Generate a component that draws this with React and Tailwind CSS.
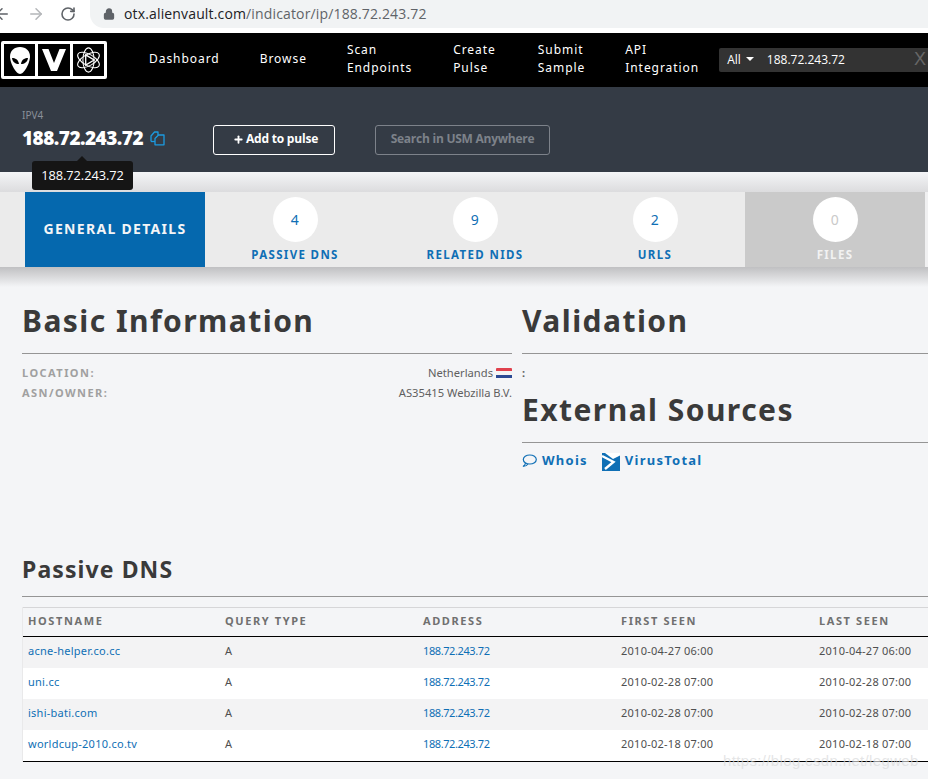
import React from "react";
import { ArrowLeft, ArrowRight, RotateCw, Lock, Plus } from "lucide-react";

const font = "font-['Noto_Sans',sans-serif]";

function Logo() {
  return (
    <div className="ml-[1px] flex h-[38px] w-[106px] gap-[3px] rounded-[2px] bg-white p-[3px]">
      <div className="flex flex-1 items-center justify-center bg-black">
        <svg width="20" height="27" viewBox="0 0 20 27">
          <path d="M10 0C4 0 0 4 0 9.500 0 16 6 27 10 27s10-11 10-17.500C20 4 16 0 10 0z" fill="#fff" />
          <path d="M2 11c3 0 6.500 1.500 7 6-3.500 0-6.500-2-7-6zM18 11c-3 0-6.500 1.500-7 6 3.500 0 6.500-2 7-6z" fill="#000" />
        </svg>
      </div>
      <div className="flex flex-1 items-center justify-center bg-black">
        <svg width="24" height="22" viewBox="0 0 24 22">
          <path d="M0 0h6.500L12 14 17.500 0H24L15 22H9z" fill="#fff" />
        </svg>
      </div>
      <div className="flex flex-1 items-center justify-center bg-black">
        <svg width="27" height="28" viewBox="0 0 28 30" fill="none" stroke="#fff" strokeWidth="1.1">
          <ellipse cx="14" cy="15" rx="13" ry="6" transform="rotate(30 14 15)" />
          <ellipse cx="14" cy="15" rx="13" ry="6" transform="rotate(-30 14 15)" />
          <ellipse cx="14" cy="15" rx="13" ry="6" transform="rotate(90 14 15)" />
          <path d="M11 9.500l9 5.500-9 5.500z" stroke="#fff" strokeWidth="1.4" />
        </svg>
      </div>
    </div>
  );
}

function NavItem({ a, b, className }) {
  return (
    <div className={`pb-[2px] text-[12px] leading-[18px] tracking-[0.95px] text-white ${className}`}>
      <div>{a}</div>
      {b && <div>{b}</div>}
    </div>
  );
}

function Tab({ n, label, muted }) {
  return (
    <div className={`flex h-full w-[180px] flex-col items-center pt-[5px] ${muted ? "bg-[#cacaca]" : ""}`}>
      <div className={`flex h-[45px] w-[45px] items-center justify-center rounded-full bg-white pb-[1px] text-[14px] tracking-[0.5px] ${muted ? "text-[#cacaca]" : "text-[#0f6fb5]"}`}>{n}</div>
      <div className={`mt-[5px] text-[11.5px] font-bold leading-[16px] tracking-[1.35px] ${muted ? "text-[#f2f2f2]" : "text-[#0f6fb5]"}`}>{label}</div>
    </div>
  );
}

const rows = [
  ["acne-helper.co.cc", "2010-04-27 06:00", "bg-[#f3f3f4]"],
  ["uni.cc", "2010-02-28 07:00", "bg-white"],
  ["ishi-bati.com", "2010-02-28 07:00", "bg-[#f3f3f4]"],
  ["worldcup-2010.co.tv", "2010-02-18 07:00", "bg-white"],
];

const h2 = "text-[30px] font-bold leading-[44px] tracking-[1.45px] text-[#3a3a3a]";

export default function App() {
  return (
    <div className={`relative h-[779px] w-[928px] overflow-hidden bg-[#f4f5f7] ${font}`}>
      {/* browser bar */}
      <div className="flex h-[33px] items-start bg-white">
        <div className="flex h-[28px] w-[90px] items-center text-[#5f6368]">
          <ArrowLeft size={18} strokeWidth={2} className="ml-[-7px]" />
          <ArrowRight size={18} strokeWidth={2} className="ml-[16px] text-[#b4b6b9]" />
          <RotateCw size={16} strokeWidth={2.4} className="ml-[15px]" />
        </div>
        <div className="flex h-[28px] flex-1 items-center rounded-bl-[14px] bg-[#f1f3f4] pl-[13px]">
          <Lock size={12} strokeWidth={2.6} className="text-[#5f6368]" fill="#5f6368" />
          <div className="mb-[1px] ml-[9px] font-['Open_Sans',sans-serif] text-[14px] tracking-[0.15px] text-[#5f6368]">
            <span className="text-[#202124]">otx.alienvault.com</span>/indicator/ip/188.72.243.72
          </div>
        </div>
      </div>

      {/* nav */}
      <div className="flex h-[54px] items-center bg-black">
        <Logo />
        <NavItem a="Dashboard" className="ml-[42px]" />
        <NavItem a="Browse" className="ml-[40px]" />
        <NavItem a="Scan" b="Endpoints" className="ml-[40px]" />
        <NavItem a="Create" b="Pulse" className="ml-[41px]" />
        <NavItem a="Submit" b="Sample" className="ml-[42px]" />
        <NavItem a="API" b="Integration" className="ml-[40px]" />
        <div className="ml-[20px] flex h-[24px] flex-1 items-center rounded-l-[2px] bg-[#333333] pb-[1px] pl-[8px] font-['Open_Sans',sans-serif] text-[12px] text-white">
          <span>All</span>
          <span className="mb-[2px] ml-[5px] h-0 w-0 border-x-[4px] border-t-[4px] border-x-transparent border-t-white" />
          <span className="ml-[13px]">188.72.243.72</span>
          <span className="ml-auto mr-[2px] font-['Liberation_Sans',sans-serif] text-[18px] text-[#666666]">X</span>
        </div>
      </div>

      {/* indicator header */}
      <div className="flex h-[85px] items-start bg-[#343b45] pl-[22px]">
        <div className="w-[191px] pt-[22px]">
          <div className="text-[10px] leading-[12px] text-[#8a9099]">IPV4</div>
          <div className="mt-[5px] flex items-center">
            <span className="font-['Open_Sans',sans-serif] text-[19px] font-extrabold leading-[24px] tracking-[-0.52px] text-white">188.72.243.72</span>
            <svg width="15" height="15" viewBox="0 0 15 15" fill="none" stroke="#1b9be0" strokeWidth="1.3" strokeLinejoin="round" className="ml-[7px] mt-[1px]">
              <path d="M1 10.500V5l3.500-4H8v3" />
              <path d="M1 10.500h4" />
              <path d="M5 13.800V7.500L8.500 4H14v9.800z" />
            </svg>
          </div>
        </div>
        <div className="mt-[38px] flex h-[30px] w-[122px] items-center justify-center rounded-[3px] border border-white pb-[2px] pl-[3px] font-['Open_Sans',sans-serif] text-[12px] font-bold tracking-[-0.2px] text-white">
          <Plus size={11} strokeWidth={4} className="mr-[2px] mt-[1px]" />
          Add to pulse
        </div>
        <div className="ml-[40px] mt-[38px] flex h-[30px] w-[175px] items-center justify-center rounded-[3px] border border-[#7d828a] pb-[2px] font-['Open_Sans',sans-serif] text-[12px] font-bold tracking-[-0.25px] text-[#7d828a]">
          Search in USM Anywhere
        </div>
      </div>

      {/* gap before tabs */}
      <div className="h-[20px] bg-gradient-to-b from-[#f4f5f7] to-[#dcdcde]" />

      {/* tabs */}
      <div className="flex h-[75px] w-full bg-[#f0f0f1]">
        <div className="flex h-full w-[925px] bg-[#ebebeb] pl-[25px]">
          <div className="flex h-full w-[180px] items-center justify-center bg-[#0568ae] pb-[3px] text-[14px] font-bold tracking-[1.3px] text-[#f4f5f7]">GENERAL DETAILS</div>
          <Tab n="4" label="PASSIVE DNS" />
          <Tab n="9" label="RELATED NIDS" />
          <Tab n="2" label="URLS" />
          <Tab n="0" label="FILES" muted />
        </div>
      </div>
      <div className="h-[20px] bg-gradient-to-b from-[#c0c0c2] to-[#f4f5f7]" />

      {/* info columns */}
      <div className="flex h-[266px] pl-[22px]">
        <div className="w-[490px] shrink-0">
          <h2 className={`mt-[12px] ${h2}`}>Basic Information</h2>
          <div className="mt-[10px] border-t border-[#959595]" />
          <div className="mt-[9px] flex items-center justify-between text-[11.2px] leading-[20px] text-[#5f5f5f]">
            <span className="text-[11px] font-bold tracking-[1.45px] text-[#a0a0a0]">LOCATION:</span>
            <span className="flex items-center">
              Netherlands
              <span className="ml-[3px] flex h-[11px] w-[16px] flex-col overflow-hidden rounded-[1px]">
                <span className="h-1/3 bg-[#e0414d]" />
                <span className="h-1/3 bg-[#f4f4f4]" />
                <span className="h-1/3 bg-[#2b4a94]" />
              </span>
            </span>
          </div>
          <div className="flex items-center justify-between text-[11.2px] leading-[20px] text-[#5f5f5f]">
            <span className="text-[11px] font-bold tracking-[1.45px] text-[#a0a0a0]">ASN/OWNER:</span>
            <span>AS35415 Webzilla B.V.</span>
          </div>
        </div>
        <div className="ml-[10px] flex-1">
          <h2 className={`mt-[12px] ${h2}`}>Validation</h2>
          <div className="mt-[10px] border-t border-[#959595]" />
          <div className="mt-[9px] text-[11px] font-bold leading-[20px] text-[#5f5f5f]">:</div>
          <h2 className={`mt-[5px] ${h2}`}>External Sources</h2>
          <div className="mt-[10px] border-t border-[#959595]" />
          <div className="mt-[7px] flex items-start text-[13px] font-bold leading-[20px] tracking-[1.25px] text-[#0f6fb5]">
            <svg width="15" height="14" viewBox="0 0 15 14" fill="none" stroke="currentColor" strokeWidth="1.2" className="mt-[4px] shrink-0">
              <ellipse cx="7.800" cy="5.500" rx="6.500" ry="4.500" />
              <path d="M3.500 9C3.300 10.800 2.500 11.800 1 12.500c2 0 3.800-.8 5-2.500" />
            </svg>
            <span className="ml-[5px]">Whois</span>
            <svg width="18" height="18" viewBox="0 0 18 18" className="ml-[14px] mt-[3px] shrink-0">
              <rect width="18" height="18" fill="#0f6fb5" />
              <path d="M3 0h15v2.500L11 6z" fill="#fff" />
              <path d="M0 3l11.500 6L3 16" fill="none" stroke="#fff" strokeWidth="2.400" />
            </svg>
            <span className="ml-[5px]">VirusTotal</span>
          </div>
        </div>
      </div>

      {/* passive dns */}
      <div className="pl-[22px]">
        <h3 className="text-[23px] font-bold leading-[33px] tracking-[1.1px] text-[#3a3a3a]">Passive DNS</h3>
        <div className="mt-[10px] border-t border-[#959595]" />
        <div className="mt-[10px] w-[1000px] border-l border-[#e9e9ea]">
          <div className="flex h-[30px] items-center border-y border-t-[#d6d6d8] border-b-black pb-[2px] pl-[5px] text-[11px] font-bold tracking-[1.6px] text-[#707070]">
            <div className="w-[197px]">HOSTNAME</div>
            <div className="w-[198px]">QUERY TYPE</div>
            <div className="w-[198px]">ADDRESS</div>
            <div className="w-[198px]">FIRST SEEN</div>
            <div className="w-[198px]">LAST SEEN</div>
          </div>
          {rows.map(([host, date, bg]) => (
            <div key={host} className={`flex h-[31px] items-center pb-[2px] pl-[5px] text-[11px] text-[#4f4f4f] ${bg}`}>
              <div className="w-[197px] tracking-[0.25px] text-[#0f6fb5]">{host}</div>
              <div className="w-[198px]">A</div>
              <div className="w-[198px] tracking-[-0.4px] text-[#0f6fb5]">188.72.243.72</div>
              <div className="w-[198px] tracking-[0.25px]">{date}</div>
              <div className="w-[198px] tracking-[0.25px]">{date}</div>
            </div>
          ))}
          <div className="border-t border-black" />
        </div>
      </div>

      {/* tooltip */}
      <div className="absolute left-[32px] top-[161px] flex h-[29px] w-[101px] items-center justify-center rounded-[3px] bg-[#151515] pt-[1px] font-['Open_Sans',sans-serif] text-[12.8px] tracking-[-0.05px] text-white">
        <span className="absolute left-[45px] top-[-5px] h-0 w-0 border-x-[5px] border-b-[5px] border-x-transparent border-b-[#151515]" />
        188.72.243.72
      </div>

      {/* watermark */}
      <div className="absolute left-[723px] top-[750px] font-['Liberation_Sans',sans-serif] text-[15px] tracking-[0.35px] text-[#d9dadb]/70">https://blog.csdn.net/legweb</div>
    </div>
  );
}
